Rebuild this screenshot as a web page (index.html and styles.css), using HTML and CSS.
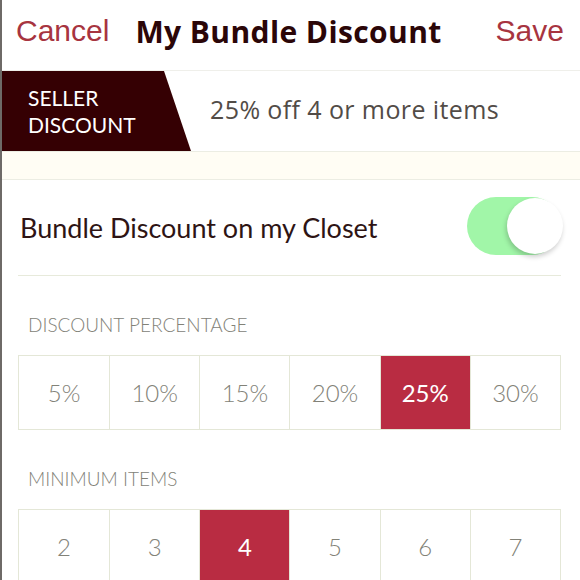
FILE: index.html
```html
<!DOCTYPE html>
<html lang="en">
<head>
    <meta charset="UTF-8">
    <meta name="viewport" content="width=device-width, initial-scale=1.0">
    <title>My Bundle Discount</title>
    <link rel="stylesheet" href="styles.css">
</head>
<body>
    <div class="screen">
        <header class="nav-bar">
            <span class="nav-link">Cancel</span>
            <h1>My Bundle Discount</h1>
            <span class="nav-link">Save</span>
        </header>

        <div class="banner">
            <div class="banner-tag">SELLER<br>DISCOUNT</div>
            <div class="banner-text">25% off 4 or more items</div>
        </div>

        <div class="band"></div>

        <div class="settings">
            <div class="toggle-row">
                <span>Bundle Discount on my Closet</span>
                <div class="toggle on"><div class="knob"></div></div>
            </div>

            <div class="section-label">DISCOUNT PERCENTAGE</div>
            <div class="choices">
                <div class="choice">5%</div>
                <div class="choice">10%</div>
                <div class="choice">15%</div>
                <div class="choice">20%</div>
                <div class="choice selected">25%</div>
                <div class="choice">30%</div>
            </div>

            <div class="section-label">MINIMUM ITEMS</div>
            <div class="choices">
                <div class="choice">2</div>
                <div class="choice">3</div>
                <div class="choice selected">4</div>
                <div class="choice">5</div>
                <div class="choice">6</div>
                <div class="choice">7</div>
            </div>
        </div>
    </div>
</body>
</html>
```

FILE: styles.css
```css
* {
    margin: 0;
    padding: 0;
    box-sizing: border-box;
}

body {
    font-family: 'Lato', 'Open Sans', sans-serif;
    background: #fff;
    width: 580px;
    height: 580px;
    overflow: hidden;
}

.screen {
    border-left: 2px solid #6e6a67;
    height: 580px;
}

.nav-bar {
    height: 71px;
    display: flex;
    align-items: center;
    padding: 0 16px 8px 14px;
    border-bottom: 1px solid #efefea;
}

.nav-link {
    font-family: 'Liberation Sans', Arial, sans-serif;
    font-size: 30px;
    color: #a73440;
}

h1 {
    flex: 1;
    font-family: 'Open Sans', 'Lato', sans-serif;
    font-size: 30px;
    font-weight: 700;
    color: #2b0608;
    padding-left: 26px;
    letter-spacing: 0.4px;
}

.banner {
    height: 80px;
    display: flex;
    align-items: center;
}

.banner-tag {
    height: 80px;
    width: 189px;
    background: #350003;
    clip-path: polygon(0 0, 162px 0, 189px 100%, 0 100%);
    color: #fff;
    font-size: 21px;
    line-height: 27px;
    padding: 13px 0 0 26px;
}

.banner-text {
    padding-left: 19px;
    font-family: 'Open Sans', 'Lato', sans-serif;
    font-size: 25px;
    letter-spacing: 0.4px;
    color: #524c47;
    padding-bottom: 4px;
}

.band {
    height: 29px;
    background: #fffdf4;
    border-top: 1px solid #ecede3;
    border-bottom: 1px solid #ecede3;
}

.settings {
    padding: 0 19px 0 16px;
}

.toggle-row {
    height: 96px;
    display: flex;
    align-items: center;
    justify-content: space-between;
    padding-left: 2px;
    border-bottom: 1px solid #e7eadb;
    font-size: 27px;
    color: #2e1414;
}

.toggle {
    width: 94px;
    height: 58px;
    border-radius: 29px;
    background: #a1f6a8;
    position: relative;
    margin-top: -4px;
}

.knob {
    position: absolute;
    top: 1px;
    right: -2px;
    width: 56px;
    height: 56px;
    border-radius: 50%;
    background: #fff;
    box-shadow: -1px 3px 5px rgba(0, 0, 0, 0.2);
}

.section-label {
    font-size: 19px;
    font-weight: 300;
    line-height: 22px;
    color: #828278;
    padding: 38px 0 19px 10px;
}

.choices {
    display: grid;
    grid-template-columns: repeat(6, 1fr);
    border: 1px solid #e4e7d7;
    height: 75px;
}

.choice {
    display: flex;
    align-items: center;
    justify-content: center;
    font-size: 24px;
    font-weight: 300;
    color: #828278;
    border-left: 1px solid #e4e7d7;
}

.choice:first-child {
    border-left: none;
}

.choice.selected {
    background: #b92c42;
    color: #fff;
    font-weight: 400;
}
```
